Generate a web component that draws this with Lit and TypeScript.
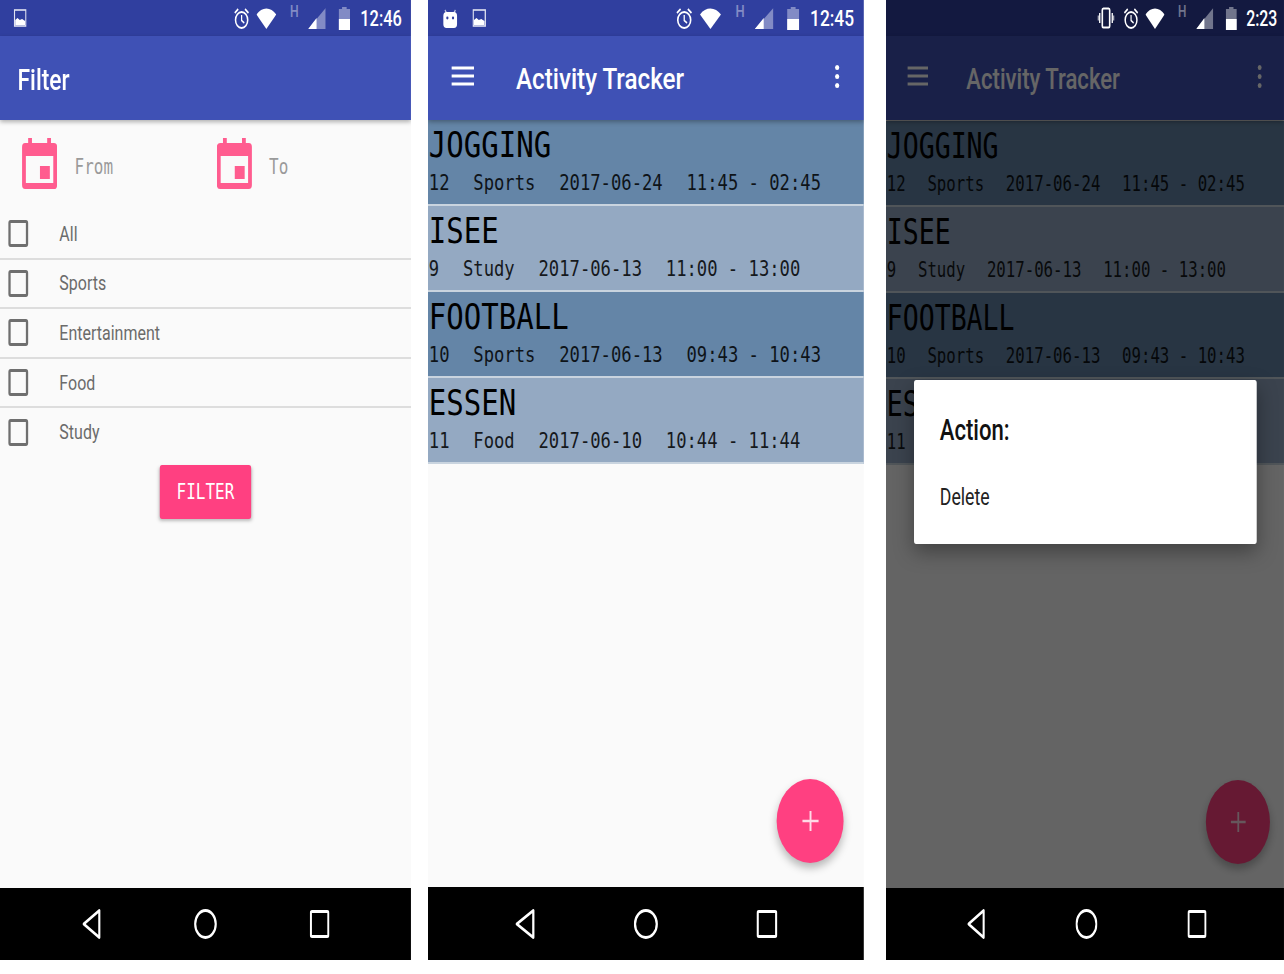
import { LitElement, html, css, svg } from 'lit';
import { customElement } from 'lit/decorators.js';

// Every phone is laid out on a 540px wide screen, then squeezed horizontally
// to the width it has in the collage (--sx = phone width / 540).

const ACTIVITIES = [
  { title: 'JOGGING', id: '12', category: 'Sports', date: '2017-06-24', time: '11:45 - 02:45' },
  { title: 'ISEE', id: '9', category: 'Study', date: '2017-06-13', time: '11:00 - 13:00' },
  { title: 'FOOTBALL', id: '10', category: 'Sports', date: '2017-06-13', time: '09:43 - 10:43' },
  { title: 'ESSEN', id: '11', category: 'Food', date: '2017-06-10', time: '10:44 - 11:44' },
];

const CATEGORIES = ['All', 'Sports', 'Entertainment', 'Food', 'Study'];

const icon = (w: number, h: number, body: unknown) => html`
  <svg width=${w} height=${h} viewBox="0 0 ${w} ${h}" preserveAspectRatio="none">${body}</svg>
`;

const imageIcon = icon(17, 18, svg`
  <rect x="1" y="1" width="15" height="16" fill="none" stroke="#fff" stroke-opacity=".85" stroke-width="1.6"/>
  <path d="M2 16v-5l3-2 3 2 3-1 4 2v4z" fill="#fff"/>
`);

const androidIcon = icon(19, 22, svg`
  <path d="M3 3l2 3M16 3l-2 3" stroke="#fff" stroke-opacity=".7" stroke-width="1.4"/>
  <path d="M1 9a4 4 0 0 1 4-4h9a4 4 0 0 1 4 4v8a4 4 0 0 1-4 4H5a4 4 0 0 1-4-4z" fill="#fff"/>
  <circle cx="6" cy="11" r="1.4" fill="#303f9f"/>
  <circle cx="13" cy="11" r="1.4" fill="#303f9f"/>
`);

const vibrateIcon = icon(23, 22, svg`
  <rect x="6.5" y="1.5" width="10" height="19" rx="1.5" fill="none" stroke="#fff" stroke-width="2.2"/>
  <path d="M3 6v10M20 6v10" stroke="#fff" stroke-width="1.8"/>
  <path d="M.8 8.5v5M22.2 8.5v5" stroke="#fff" stroke-width="1.4"/>
`);

const alarmIcon = icon(21, 23, svg`
  <circle cx="10.5" cy="13" r="8" fill="none" stroke="#fff" stroke-width="2"/>
  <path d="M10.5 8v5.5l3.5 2.5" fill="none" stroke="#fff" stroke-width="1.6"/>
  <path d="M1.5 6L6 2M19.5 6L15 2" stroke="#fff" stroke-width="2"/>
`);

const wifiIcon = icon(26, 21, svg`<path d="M0 6.5C7-1.5 19-1.5 26 6.5L13 21z" fill="#fff"/>`);

const signalIcon = icon(23, 21, svg`
  <path d="M23 0v21H0z" fill="#fff" fill-opacity=".4"/>
  <path d="M11 10v11H0z" fill="#fff"/>
`);

const batteryIcon = icon(15, 23, svg`
  <path d="M4.5 0h6v2H15v21H0V2h4.500z" fill="#fff" fill-opacity=".4"/>
  <rect y="12" width="15" height="11" fill="#fff"/>
`);

const menuIcon = icon(28, 20, svg`
  <path d="M0 2h28M0 10h28M0 18h28" stroke="currentColor" stroke-width="3"/>
`);

const moreIcon = icon(8, 25, svg`
  <circle cx="4" cy="3.500" r="2.600" fill="currentColor"/>
  <circle cx="4" cy="12.500" r="2.600" fill="currentColor"/>
  <circle cx="4" cy="21.500" r="2.600" fill="currentColor"/>
`);

const calendarIcon = icon(46, 51, svg`
  <path d="M8 0h5v5h20V0h5v5h4a4 4 0 0 1 4 4v38a4 4 0 0 1-4 4H4a4 4 0 0 1-4-4V9a4 4 0 0 1 4-4h4z" fill="#ff5c8f"/>
  <rect x="5" y="18" width="36" height="27" fill="#fafafa"/>
  <rect x="23.500" y="28" width="13" height="13" fill="#ff5c8f"/>
`);

const backIcon = icon(26, 32, svg`
  <path d="M23.500 2.500v27L3 16z" fill="none" stroke="#fff" stroke-width="2.800" stroke-linejoin="round"/>
`);

const homeIcon = icon(30, 30, svg`<circle cx="15" cy="15" r="13.500" fill="none" stroke="#fff" stroke-width="2.800"/>`);

const recentIcon = icon(26, 28, svg`
  <rect x="1.500" y="1.500" width="23" height="25" rx="1.500" fill="none" stroke="#fff" stroke-width="2.800"/>
`);

const plusIcon = icon(28, 22, svg`
  <path d="M14 1v20M4 11h20" stroke="currentColor" stroke-width="2.400"/>
`);

@customElement('app-root')
export class AppRoot extends LitElement {
  static styles = css`
    :host {
      display: block;
      height: 974px;
      background: #fff;
      font-family: Roboto, "Liberation Sans", sans-serif;
    }

    .page { display: flex; height: 960px; }

    .phone { flex: none; height: 960px; overflow: hidden; }
    .filter-phone { width: 411px; margin-right: 17px; --sx: 0.761; }
    .list-phone { width: 436px; margin-right: 22px; --sx: 0.807; }
    .dialog-phone { width: 398px; --sx: 0.737; }

    .screen {
      position: relative;
      display: flex;
      flex-direction: column;
      width: 540px;
      height: 960px;
      background: #fafafa;
      transform: scaleX(var(--sx));
      transform-origin: left top;
    }

    .status {
      flex: none;
      display: flex;
      align-items: center;
      height: 36px;
      padding: 0 12px 0 18px;
      background: #303f9f;
      color: #fff;
    }
    .status .left { display: flex; align-items: center; gap: 18px; margin-right: auto; }
    .status .right { display: flex; align-items: center; }
    .status svg { display: block; }
    .status .hsign {
      margin: -12px 13px 0 18px;
      font-size: 16px;
      font-weight: 500;
      line-height: 16px;
      opacity: 0.4;
    }
    .status .alarm { margin-right: 9px; }
    .status .vibrate { margin-right: 12px; }
    .status .battery { margin: 0 13px 0 17px; }
    .status .time { font-size: 21.500px; font-weight: 500; }
    .status.dim { background: #131940; padding-right: 9px; }

    .appbar {
      flex: none;
      position: relative;
      z-index: 1;
      display: flex;
      align-items: center;
      height: 84px;
      padding: 0 29px;
      background: #3f51b5;
      color: #fff;
      box-shadow: 0 2px 5px rgba(0, 0, 0, 0.3);
    }
    .appbar .title {
      margin: 1px auto 0 52px;
      font-size: 30px;
      font-weight: 500;
    }
    .appbar .plain-title { margin-left: -6px; margin-top: 2px; }
    .appbar svg { display: block; margin-top: -4px; }

    .content { position: relative; flex: 1; min-height: 0; }

    .dates {
      display: flex;
      align-items: center;
      box-sizing: border-box;
      height: 90px;
      padding: 0 0 4px 29px;
    }
    .date { display: flex; align-items: center; gap: 23px; width: 256px; }
    .date span {
      margin-top: 7px;
      font-family: "DejaVu Sans Mono", monospace;
      font-size: 21px;
      color: #9a9a9a;
    }
    .date svg { display: block; }

    .category {
      display: flex;
      align-items: center;
      gap: 41px;
      height: 47.600px;
      padding-left: 11px;
      border-bottom: 2px solid #ddd;
      font-size: 21px;
      color: #6b6b6b;
    }
    .category:last-of-type { border-bottom: none; }
    .box { width: 20px; height: 21px; border: 3px solid #6f6f6f; border-radius: 3px; }

    .filter-btn {
      display: block;
      width: 120px;
      height: 54px;
      margin: 9px auto 0;
      border: none;
      border-radius: 3px;
      background: #ff4081;
      color: #fff;
      font-family: "DejaVu Sans Mono", monospace;
      font-size: 21px;
      box-shadow: 0 2px 4px rgba(0, 0, 0, 0.25);
    }

    .activity {
      height: 84px;
      padding-left: 1px;
      border-bottom: 2px solid #c9d4df;
      background: #6485a7;
      color: #000;
      font-family: "DejaVu Sans Mono", monospace;
    }
    .activity:nth-child(even) { background: #94a9c2; }
    .activity .name { padding-top: 3px; font-size: 36px; line-height: 44px; }
    .activity .meta {
      display: flex;
      gap: 29.500px;
      font-size: 21.300px;
      line-height: 32px;
      white-space: pre;
      opacity: 0.85;
    }
    .dialog-phone .activities { margin-top: 1px; }

    .fab {
      position: absolute;
      right: 25px;
      bottom: 24px;
      display: flex;
      align-items: center;
      justify-content: center;
      width: 83px;
      height: 84px;
      border-radius: 50%;
      background: #ff4081;
      color: #ffd9e6;
      box-shadow: 0 5px 10px rgba(0, 0, 0, 0.28);
    }
    .dialog-phone .fab { right: 19px; width: 87px; }

    .scrim {
      position: absolute;
      inset: -84px 0 0;
      z-index: 2;
      background: rgba(0, 0, 0, 0.6);
    }

    .dialog {
      position: absolute;
      z-index: 3;
      top: 260px;
      left: 38px;
      width: 465px;
      height: 164px;
      padding: 32px 35px;
      box-sizing: border-box;
      border-radius: 3px;
      background: #fff;
      color: #111;
      box-shadow: 0 8px 24px rgba(0, 0, 0, 0.35);
    }
    .dialog .heading { font-size: 30px; font-weight: 500; line-height: 36px; }
    .dialog .item { margin-top: 34px; font-size: 24px; line-height: 30px; color: #222; }

    .nav {
      flex: none;
      display: flex;
      align-items: center;
      justify-content: center;
      height: 72px;
      background: #000;
    }
    .list-phone .nav { height: 73px; }
    .dialog-phone .nav { padding-left: 4px; }
    .nav .slot { display: flex; justify-content: center; width: 150px; }
    .nav svg { display: block; }
  `;

  private _status(time: string, left: unknown[], dim = false, vibrate = false) {
    return html`
      <div class="status ${dim ? 'dim' : ''}">
        <div class="left">${left}</div>
        <div class="right">
          ${vibrate ? html`<span class="vibrate">${vibrateIcon}</span>` : ''}
          <span class="alarm">${alarmIcon}</span>
          ${wifiIcon}
          <span class="hsign">H</span>
          ${signalIcon}
          <span class="battery">${batteryIcon}</span>
          <span class="time">${time}</span>
        </div>
      </div>
    `;
  }

  private _nav() {
    return html`
      <div class="nav">
        <div class="slot">${backIcon}</div>
        <div class="slot">${homeIcon}</div>
        <div class="slot">${recentIcon}</div>
      </div>
    `;
  }

  private _trackerBar() {
    return html`
      <div class="appbar">
        ${menuIcon}
        <span class="title">Activity Tracker</span>
        ${moreIcon}
      </div>
    `;
  }

  private _list() {
    return html`
      <div class="activities">
        ${ACTIVITIES.map((a) => html`
          <div class="activity">
            <div class="name">${a.title}</div>
            <div class="meta">
              <span>${a.id}</span><span>${a.category}</span><span>${a.date}</span><span>${a.time}</span>
            </div>
          </div>
        `)}
      </div>
    `;
  }

  render() {
    return html`
      <div class="page">
        <div class="phone filter-phone">
          <div class="screen">
            ${this._status('12:46', [imageIcon])}
            <div class="appbar"><span class="title plain-title">Filter</span></div>
            <div class="content">
              <div class="dates">
                <div class="date">${calendarIcon}<span>From</span></div>
                <div class="date">${calendarIcon}<span>To</span></div>
              </div>
              ${CATEGORIES.map((c) => html`
                <div class="category"><div class="box"></div><span>${c}</span></div>
              `)}
              <button class="filter-btn">FILTER</button>
            </div>
            ${this._nav()}
          </div>
        </div>

        <div class="phone list-phone">
          <div class="screen">
            ${this._status('12:45', [androidIcon, imageIcon])}
            ${this._trackerBar()}
            <div class="content">
              ${this._list()}
              <div class="fab">${plusIcon}</div>
            </div>
            ${this._nav()}
          </div>
        </div>

        <div class="phone dialog-phone">
          <div class="screen">
            ${this._status('2:23', [], true, true)}
            ${this._trackerBar()}
            <div class="content">
              ${this._list()}
              <div class="fab">${plusIcon}</div>
              <div class="scrim"></div>
              <div class="dialog">
                <div class="heading">Action:</div>
                <div class="item">Delete</div>
              </div>
            </div>
            ${this._nav()}
          </div>
        </div>
      </div>
    `;
  }
}
